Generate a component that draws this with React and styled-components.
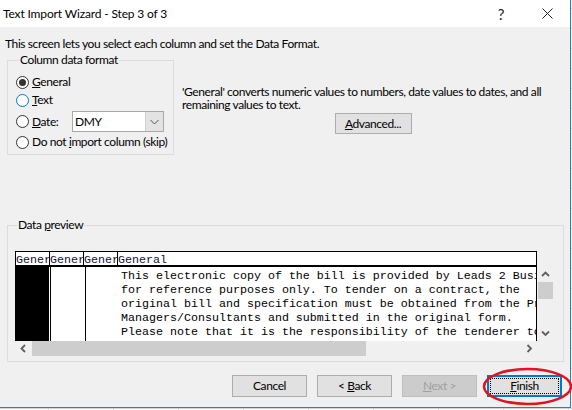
import React from "react";
import styled, { createGlobalStyle } from "styled-components";

const GlobalStyle = createGlobalStyle`
  html, body {
    margin: 0;
    padding: 0;
  }
  body {
    background: #ffffff;
    font-family: Lato, "Noto Sans", sans-serif;
  }
`;

/* everything behind the dialog: a sliver of the spreadsheet */
const Screen = styled.div`
  position: relative;
  width: 572px;
  height: 410px;
  overflow: hidden;
  background-color: #ffffff;
  background-image: linear-gradient(90deg, #d4d4d4 1px, transparent 1px),
    linear-gradient(#d4d4d4 1px, transparent 1px);
  background-size: 65px 20px;
  background-position: 48px 0, 0 8px;
`;

const Dialog = styled.div`
  width: 571px;
  height: 408px;
  box-sizing: border-box;
  border-right: 1px solid #1883d7;
  border-bottom: 1px solid #1883d7;
  background: #f0f0f0;
  display: flex;
  flex-direction: column;
  font-size: 12px;
  letter-spacing: -0.4px;
  color: #000;
`;

/* title bar */
const TitleBar = styled.div`
  height: 27px;
  flex: none;
  background: #ffffff;
  display: flex;
  align-items: center;
  padding-left: 3px;
`;

const Title = styled.div`
  flex: 1;
  line-height: 16px;
  letter-spacing: -0.15px;
`;

const TitleButton = styled.div`
  width: 46px;
  height: 27px;
  display: flex;
  align-items: center;
  justify-content: center;
  font-size: 15px;
  color: #222;
`;

/* body */
const Body = styled.div`
  flex: 1;
  display: flex;
  flex-direction: column;
  padding: 9px 6px 0 7px;
`;

const Intro = styled.div`
  line-height: 16px;
  margin-left: -2px;
`;

const TopRow = styled.div`
  display: flex;
  gap: 8px;
  align-items: flex-start;
`;

const GroupBox = styled.fieldset`
  box-sizing: border-box;
  flex: none;
  width: ${(p) => p.$width}px;
  margin: 0;
  min-width: 0;
  border: 1px solid #dcdcdc;
  padding: ${(p) => p.$pad};
`;

const Legend = styled.legend`
  padding: 0 1px;
  margin-left: ${(p) => p.$indent || 3}px;
  line-height: 16px;
  font-size: 12px;
`;

const U = styled.span`
  text-decoration: underline;
  text-underline-offset: 1px;
`;

const RadioRow = styled.div`
  display: flex;
  align-items: center;
  gap: 3px;
  height: ${(p) => p.$h || 18}px;
  margin: ${(p) => p.$m || "0"};
  line-height: 16px;
  white-space: nowrap;
`;

const RadioDot = styled.span`
  box-sizing: border-box;
  width: 13px;
  height: 13px;
  flex: none;
  border-radius: 50%;
  border: 1px solid ${(p) => (p.$hover ? "#0078d7" : "#333333")};
  background: #ffffff;
  display: flex;
  align-items: center;
  justify-content: center;

  &::after {
    content: "";
    width: 7px;
    height: 7px;
    border-radius: 50%;
    background: ${(p) => (p.$checked ? "#333333" : "transparent")};
  }
`;

const Select = styled.div`
  box-sizing: border-box;
  margin-left: auto;
  width: 92px;
  height: 21px;
  border: 1px solid #a8a8a8;
  background: #ffffff;
  display: flex;
  align-items: stretch;
`;

const SelectValue = styled.div`
  flex: 1;
  padding-left: 2px;
  line-height: 19px;
`;

const SelectButton = styled.div`
  width: 17px;
  background: #e3e3e3;
  border-left: 1px solid #d0d0d0;
  display: flex;
  align-items: center;
  justify-content: center;
`;

const Info = styled.div`
  flex: 1;
  min-width: 0;
  display: flex;
  flex-direction: column;
  padding-top: 33px;
`;

const InfoText = styled.div`
  line-height: 13px;
  white-space: nowrap;
`;

const Button = styled.div`
  box-sizing: border-box;
  width: ${(p) => p.$w || 75}px;
  height: ${(p) => p.$h || 22}px;
  background: ${(p) => (p.$disabled ? "#cccccc" : "#e1e1e1")};
  border: ${(p) =>
    p.$default ? "2px solid #0078d7" : `1px solid ${p.$disabled ? "#bfbfbf" : "#adadad"}`};
  color: ${(p) => (p.$disabled ? "#a0a0a0" : "#000")};
  display: flex;
  align-items: center;
  justify-content: center;
  line-height: 16px;
  outline: ${(p) => (p.$default ? "1px dotted #000" : "none")};
  outline-offset: -4px;
`;

const AdvancedButton = styled(Button)`
  align-self: center;
  margin-top: 2px;
`;

/* data preview */
const PreviewFrame = styled.div`
  display: grid;
  grid-template-columns: 522px 16px;
  grid-template-rows: 16px 74px 15px;
  width: 538px;
  letter-spacing: 0;
`;

const mono = `"Liberation Mono", "Courier New", monospace`;

const HeaderRow = styled.div`
  box-sizing: border-box;
  display: flex;
  align-items: flex-start;
  background: #ffffff;
  border: 1px solid #000;
  border-bottom: 2px solid #000;
  font-family: ${mono};
  font-size: 11.67px;
  color: #10103a;
`;

const HeaderCell = styled.div`
  box-sizing: border-box;
  height: 13px;
  line-height: 17px;
  width: ${(p) => (p.$w ? `${p.$w}px` : "auto")};
  flex: ${(p) => (p.$w ? "none" : 1)};
  border-right: ${(p) => (p.$w ? "1px solid #000" : "none")};
  overflow: hidden;
  white-space: nowrap;
  margin-left: -1px;
  padding-left: 1px;
`;

const BodyRow = styled.div`
  box-sizing: border-box;
  display: flex;
  background: #ffffff;
  border-left: 1px solid #000;
  border-right: 1px solid #000;
  overflow: hidden;
`;

const DataColumn = styled.div`
  box-sizing: border-box;
  width: 35px;
  flex: none;
  background: ${(p) => (p.$selected ? "#000" : "#fff")};
  border-right: ${(p) => (p.$line ? "1px solid #000" : "none")};
  box-shadow: ${(p) => (p.$selected ? "inset -1px 0 #fff" : "none")};
`;

const TextColumn = styled.pre`
  flex: 1;
  margin: 0;
  padding: 2px 0 0 0;
  overflow: hidden;
  font-family: ${mono};
  font-size: 11.67px;
  line-height: 14px;
  color: #000;
`;

const VScroll = styled.div`
  display: flex;
  flex-direction: column;
  background: #f0f0f0;
`;

const ScrollArrow = styled.div`
  width: ${(p) => p.$w || 16}px;
  height: ${(p) => p.$h || 15}px;
  flex: none;
  display: flex;
  align-items: center;
  justify-content: center;
`;

const VThumb = styled.div`
  height: 17px;
  margin-left: 1px;
  background: #cdcdcd;
`;

const Spacer = styled.div`
  flex: 1;
`;

const HScroll = styled.div`
  display: flex;
  background: #f0f0f0;
`;

const HThumb = styled.div`
  width: 334px;
  background: #cdcdcd;
`;

const Corner = styled.div`
  background: #f0f0f0;
`;

const ButtonRow = styled.div`
  display: flex;
  justify-content: flex-end;
  gap: 10px;
  margin: 13px 2px 0 0;
`;

/* the red marker drawn on the screenshot */
const Marker = styled.svg`
  position: absolute;
  left: 482px;
  top: 367px;
  pointer-events: none;
`;

const Chevron = ({ dir }) => {
  const d = {
    up: "M1 5 L4.5 1.5 L8 5",
    down: "M1 1.5 L4.5 5 L8 1.5",
    left: "M5 1 L1.5 4.5 L5 8",
    right: "M1.5 1 L5 4.5 L1.5 8",
  }[dir];
  const vertical = dir === "up" || dir === "down";
  return (
    <svg width={vertical ? 9 : 7} height={vertical ? 7 : 9} viewBox={vertical ? "0 0 9 7" : "0 0 7 9"}>
      <path d={d} fill="none" stroke="#606060" strokeWidth="1.8" />
    </svg>
  );
};

const previewText = [
  "This electronic copy of the bill is provided by Leads 2 Business (Pty) Ltd",
  "for reference purposes only. To tender on a contract, the",
  "original bill and specification must be obtained from the Project",
  "Managers/Consultants and submitted in the original form.",
  "Please note that it is the responsibility of the tenderer to ensure",
].join("\n");

const App = () => {
  return (
    <Screen>
      <GlobalStyle />
      <Dialog>
        <TitleBar>
          <Title>Text Import Wizard - Step 3 of 3</Title>
          <TitleButton>?</TitleButton>
          <TitleButton>
            <svg width="11" height="11" viewBox="0 0 11 11">
              <path d="M0.5 0.5 L10.5 10.5 M10.5 0.5 L0.5 10.5" stroke="#222" strokeWidth="1" />
            </svg>
          </TitleButton>
        </TitleBar>

        <Body>
          <Intro>This screen lets you select each column and set the Data Format.</Intro>

          <TopRow>
            <GroupBox $width={167} $pad="5px 9px 3px 8px">
              <Legend>Column data format</Legend>
              <RadioRow>
                <RadioDot $checked />
                <span>
                  <U>G</U>eneral
                </span>
              </RadioRow>
              <RadioRow>
                <RadioDot $hover />
                <span>
                  <U>T</U>ext
                </span>
              </RadioRow>
              <RadioRow $h={21} $m="2px 0 1px">
                <RadioDot />
                <span>
                  <U>D</U>ate:
                </span>
                <Select>
                  <SelectValue>DMY</SelectValue>
                  <SelectButton>
                    <svg width="9" height="6" viewBox="0 0 9 6">
                      <path d="M0.5 1 L4.5 5 L8.5 1" fill="none" stroke="#555" strokeWidth="1" />
                    </svg>
                  </SelectButton>
                </Select>
              </RadioRow>
              <RadioRow>
                <RadioDot />
                <span>
                  Do not <U>i</U>mport column (skip)
                </span>
              </RadioRow>
            </GroupBox>

            <Info>
              <InfoText>
                'General' converts numeric values to numbers, date values to dates, and all
                <br />
                remaining values to text.
              </InfoText>
              <AdvancedButton $w={77} $h={21}>
                <span>
                  <U>A</U>dvanced...
                </span>
              </AdvancedButton>
            </Info>
          </TopRow>

          <GroupBox $width={557} $pad="18px 9px 5px 7px" style={{ marginTop: 62 }}>
            <Legend $indent={2}>
              Data <U>p</U>review
            </Legend>
            <PreviewFrame>
              <HeaderRow>
                <HeaderCell $w={35}>General</HeaderCell>
                <HeaderCell $w={35}>General</HeaderCell>
                <HeaderCell $w={35}>General</HeaderCell>
                <HeaderCell>General</HeaderCell>
              </HeaderRow>
              <Corner />
              <BodyRow>
                <DataColumn $selected $line />
                <DataColumn $line />
                <DataColumn />
                <TextColumn>{previewText}</TextColumn>
              </BodyRow>
              <VScroll>
                <ScrollArrow>
                  <Chevron dir="up" />
                </ScrollArrow>
                <VThumb />
                <Spacer />
                <ScrollArrow $h={16}>
                  <Chevron dir="down" />
                </ScrollArrow>
              </VScroll>
              <HScroll>
                <ScrollArrow $w={17}>
                  <Chevron dir="left" />
                </ScrollArrow>
                <HThumb />
                <Spacer />
                <ScrollArrow>
                  <Chevron dir="right" />
                </ScrollArrow>
              </HScroll>
              <Corner />
            </PreviewFrame>
          </GroupBox>

          <ButtonRow>
            <Button>Cancel</Button>
            <Button>
              <span>
                &lt; <U>B</U>ack
              </span>
            </Button>
            <Button $disabled>
              <span>
                <U>N</U>ext &gt;
              </span>
            </Button>
            <Button $default>
              <span>
                <U>F</U>inish
              </span>
            </Button>
          </ButtonRow>
        </Body>
      </Dialog>

      <Marker width="92" height="40" viewBox="0 0 92 40">
        <ellipse cx="45.5" cy="19.5" rx="43.5" ry="17.5" fill="none" stroke="#e3121b" strokeWidth="2.6" />
      </Marker>
    </Screen>
  );
};

export default App;
